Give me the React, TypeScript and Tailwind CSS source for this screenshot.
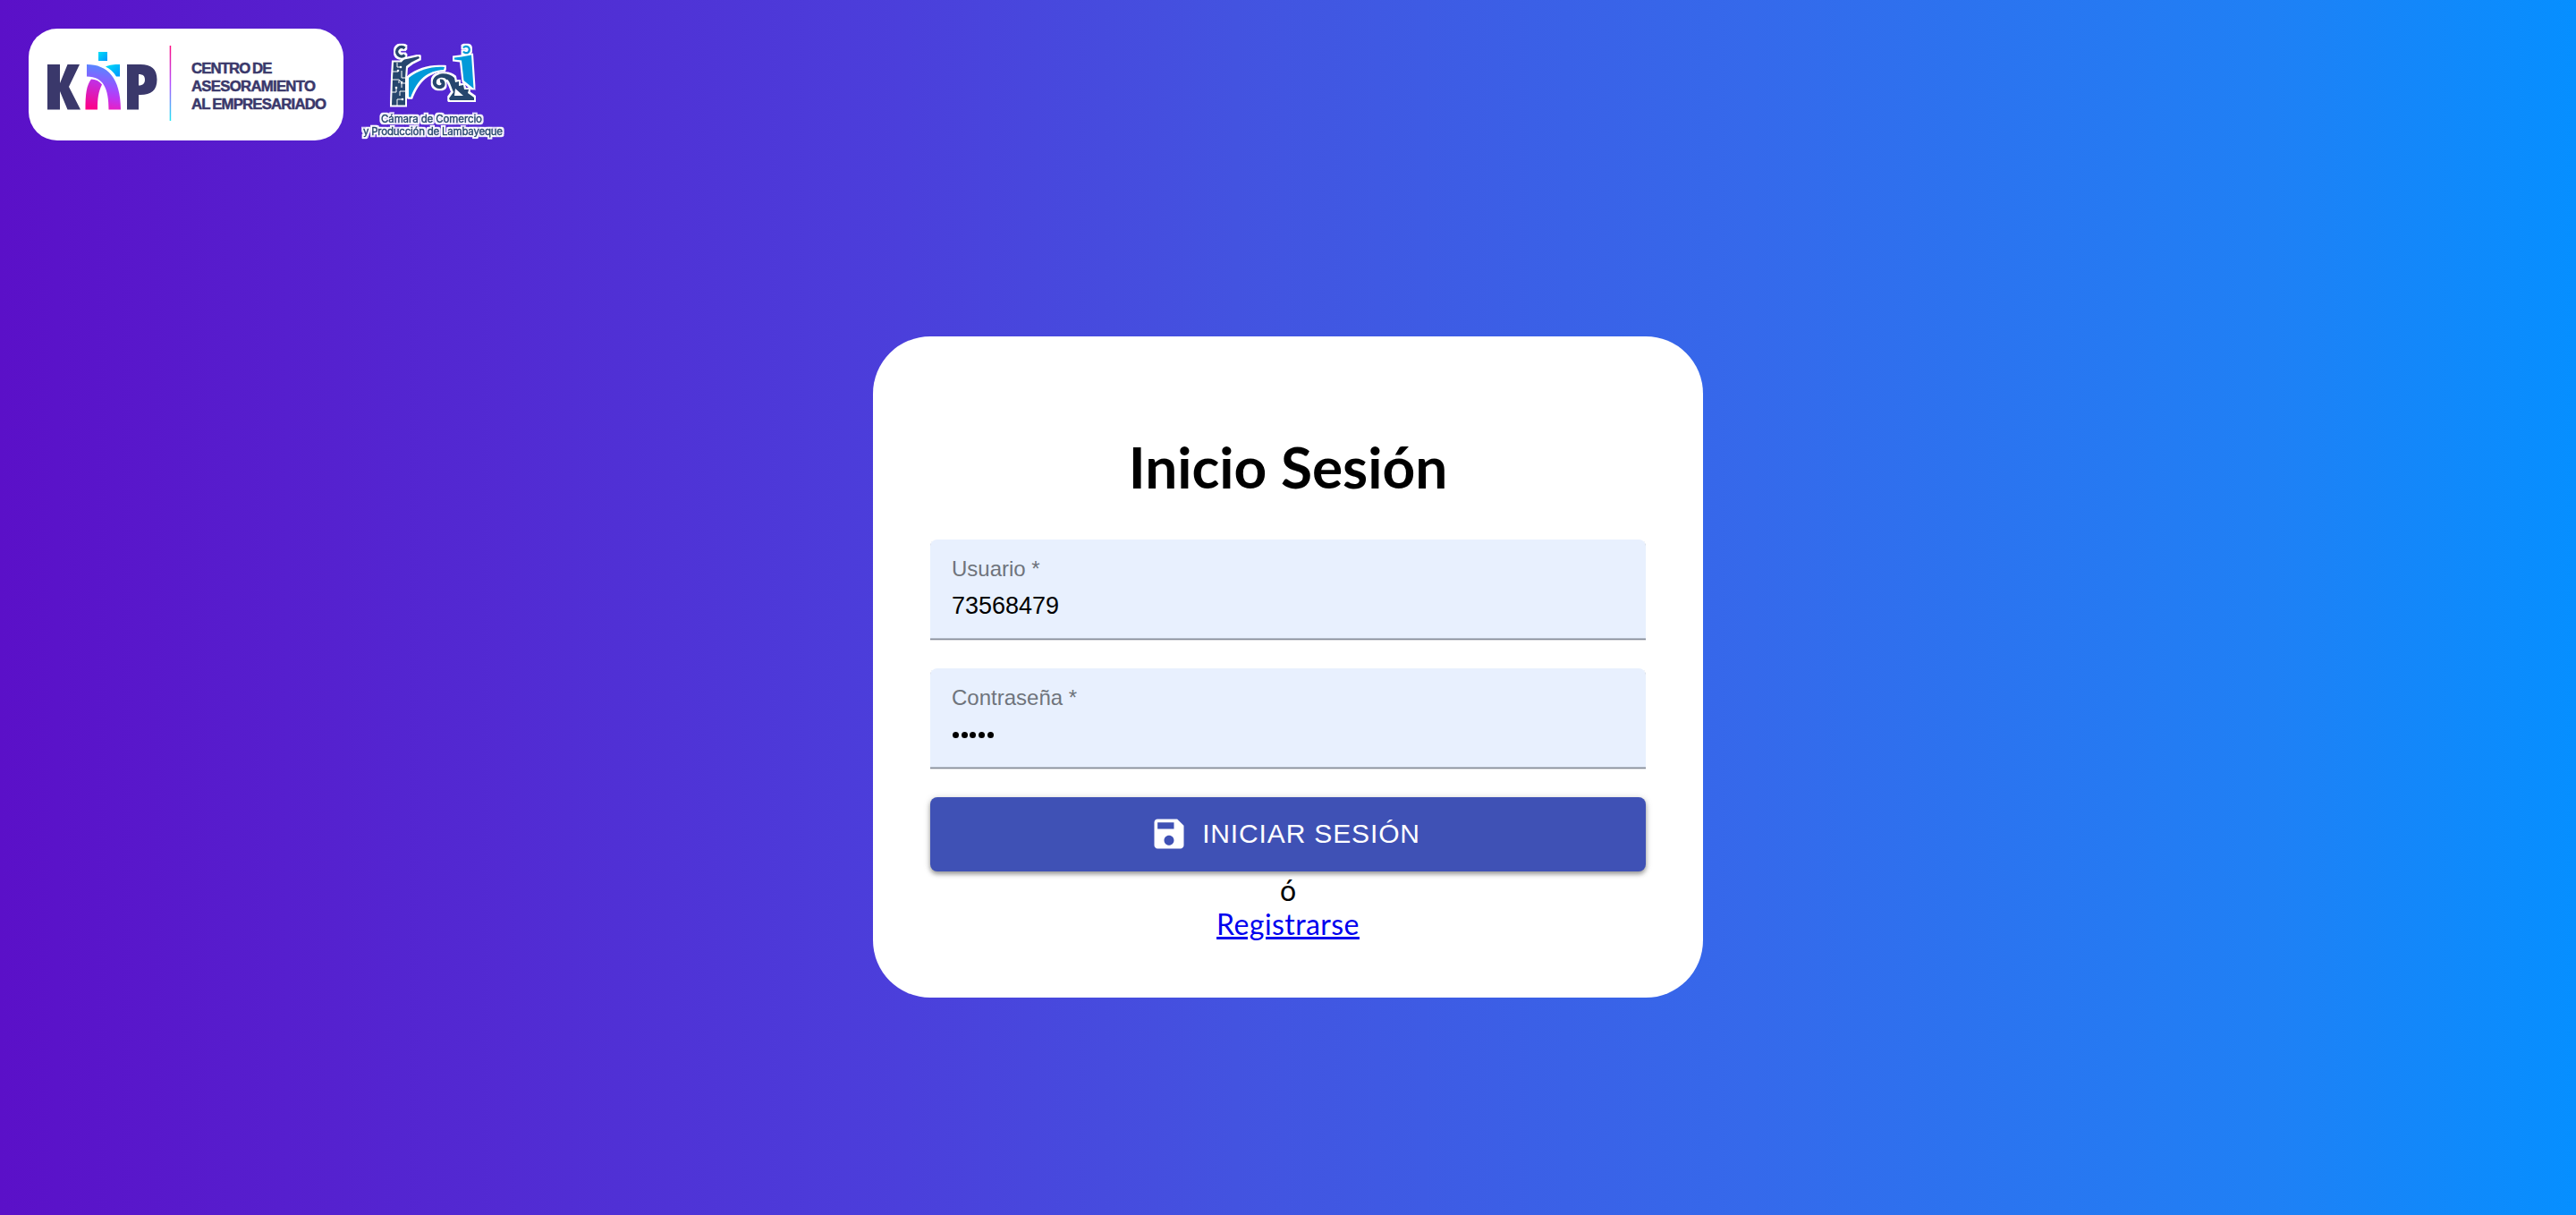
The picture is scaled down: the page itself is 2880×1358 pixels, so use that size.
import React from "react";

function KapLogo() {
  return (
    <svg viewBox="0 0 352 125" className="h-[125px] w-[352px] shrink-0" fontFamily='"Liberation Sans", Arial, sans-serif'>
      <defs>
        <linearGradient id="line" x1="0" y1="0" x2="0" y2="1">
          <stop offset="0" stopColor="#ff0a80" />
          <stop offset=".5" stopColor="#b44cff" />
          <stop offset="1" stopColor="#1ce8f4" />
        </linearGradient>
        <linearGradient id="arch" gradientUnits="userSpaceOnUse" x1="94" y1="42" x2="84" y2="92">
          <stop offset="0" stopColor="#4f8dff" />
          <stop offset=".5" stopColor="#a04cff" />
          <stop offset=".7" stopColor="#c035f0" />
          <stop offset="1" stopColor="#f31ab5" />
        </linearGradient>
        <linearGradient id="leg" gradientUnits="userSpaceOnUse" x1="78" y1="56" x2="70" y2="91">
          <stop offset="0" stopColor="#bb35ef" />
          <stop offset="1" stopColor="#ff0084" />
        </linearGradient>
        <linearGradient id="cyan" x1="0" y1="0" x2="1" y2="1">
          <stop offset="0" stopColor="#00e0f5" />
          <stop offset="1" stopColor="#0095ff" />
        </linearGradient>
      </defs>
      <rect width="352" height="125" rx="32" fill="#fff" />
      <path fill="#3a386b" d="M21 40h14v21l8.500-21H57L45 65l13 25.500H43.500L35 70v20.500H21z" />
      <path fill="#3a386b" fillRule="evenodd" d="M110 40h15c12 0 18.500 5 18.500 17s-6.500 17-18.500 17h-2v16.500h-13zM123 51v12.500c5 0 7-2.500 7-6.500s-2-6-7-6z" />
      <rect x="78" y="26" width="10" height="10" fill="url(#cyan)" />
      <path fill="url(#cyan)" d="M86 42.500c5-2 9-2.500 16-2.500v13.500h-4c-3-5-7-8.500-12-11z" />
      <path fill="url(#arch)" d="M65 40c23 0 38 15 38 50.500H89.500c0-23-5.500-37-24.500-37z" />
      <path fill="url(#leg)" d="M70 56.500c5 0 9 2 12 6-4 8-5 15-5 28H63.500c0-17 1-27 6.500-34z" />
      <rect x="157.700" y="19" width="1.500" height="84" fill="url(#line)" />
      <g fill="#3a386b" stroke="#3a386b" strokeWidth=".5" fontSize="16.800" fontWeight="700">
        <text x="182" y="50" textLength="90.500" wordSpacing="-1">CENTRO DE</text>
        <text x="182" y="70" textLength="139">ASESORAMIENTO</text>
        <text x="182" y="90" textLength="151" wordSpacing="-1">AL EMPRESARIADO</text>
      </g>
    </svg>
  );
}

function CamaraLogo() {
  return (
    <svg viewBox="0 0 190 140" className="h-[140px] w-[190px] shrink-0" fontFamily="Inter, sans-serif">
      <defs>
        <filter id="halo" x="-10%" y="-15%" width="120%" height="130%" colorInterpolationFilters="sRGB">
          <feMorphology in="SourceAlpha" operator="dilate" radius="2" result="d" />
          <feFlood floodColor="#fff" />
          <feComposite in2="d" operator="in" />
          <feMerge><feMergeNode /><feMergeNode in="SourceGraphic" /></feMerge>
        </filter>
      </defs>
      <g filter="url(#halo)">
        <path d="M62.500 24A5.200 5.200 0 1 0 62.500 31.500" fill="none" stroke="#26466d" strokeWidth="3.400" />
        <path d="M50 39.500h9c2-3 4-3.500 8-4l11-2.500 1 2-9 4.500-6 4.500-1 13.500v30H48l1-30z" fill="#26466d" />
        <path d="M67 57c12-9 25-13 40-12l-1 3c-18 1-29 10-37 31l-2-1z" fill="#009ad9" />
        <path d="M118 34.500l8-1 11-2 2.500 37.500-11-9-2.500-22.500-8-1z" fill="#009ad9" />
        <path d="M128 23.500a3.700 3.700 0 1 1 0 4" fill="none" stroke="#009ad9" strokeWidth="2.300" />
        <path d="M102 60.500c4-.5 5 5 1 6.500-5 1.500-8-3-7-7 2-6 11-7 15-2" fill="none" stroke="#26466d" strokeWidth="4" />
        <path d="M100 53c7-2 14 0 18 4l1 5 4-1v5l5-1 1 5h5l-1 4 7 5v3h-27l-1-2 5-7c-3-7-4-13-9-16z" fill="#26466d" />
      </g>
      <g fill="none" stroke="#fff" strokeWidth="1">
        <path d="M54 40v5h4M49 50h6v-2M59 49v8h4M48 59h8l3 3v6M56 63v-3M58 63h5M48 73h5v-5M63 72h-6v5M54 88v-7h6" />
        <g fill="#fff" stroke="none">
          <circle cx="58" cy="45" r="1.300" />
          <circle cx="55" cy="49" r="1.300" />
          <circle cx="59" cy="62" r="1.300" />
          <circle cx="53" cy="68" r="1.300" />
          <circle cx="60" cy="81" r="1.300" />
        </g>
        <path d="M119 69l9 8h-10z" fill="#fff" stroke="none" />
      </g>
      <g filter="url(#halo)" fontSize="11.500" fill="#26466d" stroke="#26466d" strokeWidth=".35">
        <text x="36" y="106.500" textLength="113">Cámara de Comercio</text>
        <text x="16" y="121" textLength="156">y Producción de Lambayeque</text>
      </g>
    </svg>
  );
}

function Field({ label, value }: { label: string; value: React.ReactNode }) {
  return (
    <div className="mb-8 h-28 rounded-t-lg bg-[#e8f0fe] px-6 pt-[19px] font-['Liberation_Sans',Arial,sans-serif] shadow-[inset_0_-1px_0_#858c98,inset_0_-2px_0_#b9c1cd,0_1px_0_#d9dbdf]">
      <div className="h-7 text-2xl leading-7 text-[#6f747c]">{label}</div>
      <div className="mt-[13px] flex h-7 items-center text-[27px] leading-7 text-black">{value}</div>
    </div>
  );
}

export default function App() {
  return (
    <div className="flex h-[1358px] w-[2880px] flex-col overflow-hidden bg-[linear-gradient(to_right,#5b10c8,#4b3fdb_35%,#4353e0_48%,#3569eb_68%,#1f80f5_88%,#068fff)] font-['Lato',sans-serif] text-black">
      <header className="flex h-[376px] items-start pl-8 pt-8">
        <KapLogo />
        <div className="ml-1.5 -mt-0.5"><CamaraLogo /></div>
      </header>
      <main className="mx-auto h-[739px] w-[928px] rounded-[64px] bg-white px-16 pt-[107px]">
        <h1 className="mb-[43px] text-center text-[64px] font-bold leading-[77px]">Inicio Sesión</h1>
        <Field label="Usuario *" value="73568479" />
        <Field
          label="Contraseña *"
          value={
            <span className="ml-px flex gap-[2.700px]">
              {[0, 1, 2, 3, 4].map((i) => (
                <span key={i} className="size-[7px] rounded-full bg-black" />
              ))}
            </span>
          }
        />
        <button className="flex h-[83px] w-full items-center justify-center rounded-lg bg-[#3f51b5] pb-0.5 pr-[7px] font-['Liberation_Sans',Arial,sans-serif] text-[30px] leading-none tracking-[0.857px] text-white shadow-[0_3px_5px_rgba(0,0,0,0.35),0_1px_8px_rgba(0,0,0,0.15)]">
          <svg viewBox="0 0 24 24" className="mr-[15px] mt-px size-11 fill-current">
            <path d="M17 3H5c-1.110 0-2 .9-2 2v14c0 1.100.89 2 2 2h14c1.100 0 2-.9 2-2V7l-4-4zm-5 16c-1.660 0-3-1.340-3-3s1.340-3 3-3 3 1.340 3 3-1.340 3-3 3zm3-10H5V5h10v4z" />
          </svg>
          INICIAR SESIÓN
        </button>
        <div className="mt-0.5 text-center text-[32px] leading-[38px]">
          <div>ó</div>
          <a href="#" className="tracking-[0.420px] text-[#0000ee] underline decoration-[2.500px]">Registrarse</a>
        </div>
      </main>
    </div>
  );
}
